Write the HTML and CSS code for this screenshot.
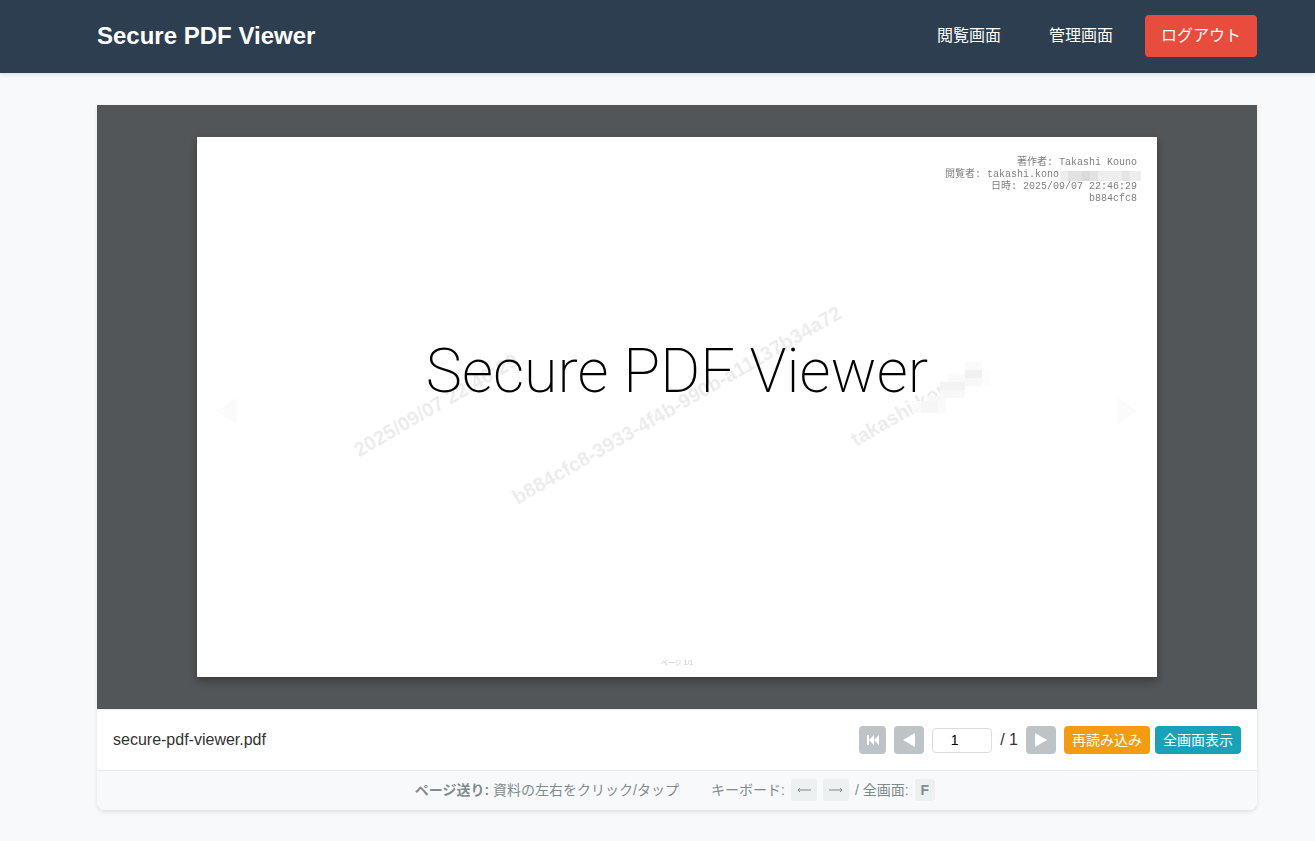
FILE: index.html
```html
<!DOCTYPE html>
<html lang="ja">
<head>
<meta charset="utf-8">
<meta name="viewport" content="width=device-width, initial-scale=1">
<title>Secure PDF Viewer</title>
<link rel="stylesheet" href="styles.css">
</head>
<body>
<header class="header">
  <h1 class="brand">Secure PDF Viewer</h1>
  <nav class="nav">
    <a class="nav-link" href="#">閲覧画面</a>
    <a class="nav-link" href="#">管理画面</a>
    <a class="nav-link logout" href="#">ログアウト</a>
  </nav>
</header>
<main class="main">
  <section class="viewer">
    <div class="stage">
      <svg class="page" viewBox="0 0 960 540" role="img" aria-label="Secure PDF Viewer">
        <rect width="960" height="540" fill="#fff"/>
        <text class="slide-title" x="480" y="255">Secure PDF Viewer</text>
        <g class="watermark">
          <text class="centered" transform="translate(239 268) rotate(-30)" y="7">2025/09/07 22:46:29</text>
          <text class="centered" transform="translate(480 268) rotate(-30)" y="7">b884cfc8-3933-4f4b-990b-a11137b34a72</text>
          <text transform="translate(659 310) rotate(-30)">takashi.kono</text>
        </g>
        <g class="mosaic">
          <rect x="715" y="264" width="34" height="12" fill="#fafafa"/>
          <rect x="724" y="264" width="17" height="12" fill="#f6f6f6"/>
          <rect x="731" y="259" width="17" height="5" fill="#f8f8f8"/>
          <rect x="743" y="253" width="25" height="8" fill="#f8f8f8"/>
          <rect x="743" y="245" width="25" height="8" fill="#f3f3f3"/>
          <rect x="751" y="237" width="25" height="8" fill="#fafafa"/>
          <rect x="768" y="225" width="17" height="8" fill="#fafafa"/>
          <rect x="768" y="233" width="17" height="8" fill="#f1f1f1"/>
          <rect x="768" y="241" width="17" height="8" fill="#f8f8f8"/>
          <rect x="785" y="233" width="9" height="16" fill="#fdfdfd"/>
        </g>
        <g class="stamp">
          <text x="940" y="28">著作者: Takashi Kouno</text>
          <text x="862" y="40">閲覧者: takashi.kono</text>
          <text x="940" y="52">日時: 2025/09/07 22:46:29</text>
          <text x="940" y="64">b884cfc8</text>
        </g>
        <g class="mosaic">
          <rect x="863" y="34" width="81" height="10" fill="#eee"/>
          <rect x="871" y="34" width="14" height="10" fill="#e2e2e2"/>
          <rect x="885" y="34" width="8" height="10" fill="#dadada"/>
          <rect x="893" y="34" width="8" height="10" fill="#e2e2e2"/>
          <rect x="925" y="34" width="8" height="10" fill="#e5e5e5"/>
        </g>
        <path d="M20 274l20-14v28z" fill="#fbfbfb"/>
        <path d="M940 274l-20-14v28z" fill="#fbfbfb"/>
        <text class="page-label" x="480" y="528">ページ 1/1</text>
      </svg>
    </div>
    <div class="toolbar">
      <span class="filename">secure-pdf-viewer.pdf</span>
      <div class="controls">
        <button class="btn small" disabled aria-label="最初のページ"><svg width="12" height="10" viewBox="0 0 12 10"><path d="M0 0h2v10H0zM7 0v10L2 5zM12 0v10L7 5z"/></svg></button>
        <button class="btn" disabled aria-label="前のページ"><svg width="12" height="14" viewBox="0 0 12 14"><path d="M12 0v14L0 7z"/></svg></button>
        <input class="page-input" type="text" inputmode="numeric" value="1" aria-label="ページ番号">
        <span class="total">/ 1</span>
        <button class="btn" disabled aria-label="次のページ"><svg width="12" height="14" viewBox="0 0 12 14"><path d="M0 0v14l12-7z"/></svg></button>
        <div class="actions">
          <button class="btn reload">再読み込み</button>
          <button class="btn fullscreen">全画面表示</button>
        </div>
      </div>
    </div>
    <div class="hints">
      <span><strong>ページ送り:</strong> 資料の左右をクリック/タップ</span>
      <span class="keys">キーボード: <kbd><svg width="14" height="8" viewBox="0 0 14 8"><path d="M14 4H1M3 2L1 4l2 2"/></svg></kbd><kbd><svg width="14" height="8" viewBox="0 0 14 8"><path d="M0 4h13M11 2l2 2-2 2"/></svg></kbd><span>/ 全画面:</span><kbd>F</kbd></span>
    </div>
  </section>
</main>
</body>
</html>
```

FILE: styles.css
```css
* { box-sizing: border-box; }

body {
  margin: 0;
  background: #f8f9fb;
  color: #333;
  font: 16px/26px "Liberation Sans", "Noto Sans CJK JP", sans-serif;
}

.header {
  display: flex;
  align-items: center;
  justify-content: space-between;
  padding: 15px 58px 16px 97px;
  background: #2c3e50;
  color: #fff;
  box-shadow: 0 2px 4px rgba(0, 0, 0, 0.1);
}

.brand { margin: 0; font-size: 24px; line-height: 38px; }

.nav { display: flex; gap: 16px; }

.nav-link {
  padding: 8px 16px;
  border-radius: 4px;
  color: #fff;
  text-decoration: none;
}

.logout { background: #e74c3c; }

.main { padding: 32px 58px 31px 97px; }

.viewer {
  overflow: hidden;
  border-radius: 0 0 8px 8px;
  background: #fff;
  box-shadow: 0 2px 4px rgba(0, 0, 0, 0.1);
}

.stage { display: flex; padding: 32px 100px; background: #525659; }

.page {
  display: block;
  width: 100%;
  box-shadow: 0 4px 8px rgba(0, 0, 0, 0.3);
}

.slide-title {
  font: 200 61px Roboto, sans-serif;
  text-anchor: middle;
}

.watermark { fill: #000; opacity: 0.08; font: bold 20px "Liberation Sans", sans-serif; }
.centered { text-anchor: middle; }

.stamp {
  fill: #7f7f7f;
  font: 10px "Liberation Mono", "Noto Sans CJK JP", monospace;
  text-anchor: end;
}

.page-label {
  fill: #ccc;
  font: 7px "Liberation Sans", "Noto Sans CJK JP", sans-serif;
  text-anchor: middle;
}

.toolbar {
  display: flex;
  align-items: center;
  justify-content: space-between;
  padding: 16px;
  border-top: 1px solid #e9ecef;
}

.controls { display: flex; align-items: center; gap: 8px; }
.actions { display: flex; gap: 5px; }

.btn {
  display: flex;
  align-items: center;
  justify-content: center;
  height: 28px;
  min-width: 30px;
  padding: 0 8px;
  border: 0;
  border-radius: 4px;
  background: #bdc3c7;
  color: #fff;
  font: 400 14px/28px "Liberation Sans", "Noto Sans CJK JP", sans-serif;
}

.btn svg { fill: #fff; }
.small { min-width: 27px; padding: 0; }
.reload { background: #f39c12; }
.fullscreen { background: #17a2b8; }

.page-input {
  width: 60px;
  height: 25px;
  padding: 0 15px 0 0;
  border: 1px solid #ddd;
  border-radius: 4px;
  font: 14px "Liberation Sans", sans-serif;
  text-align: center;
}

.hints {
  display: flex;
  align-items: center;
  justify-content: center;
  gap: 32px;
  padding: 8px 20px 9px 16px;
  border-top: 1px solid #e9ecef;
  background: #f8f9fb;
  color: #7f8c8d;
  font-size: 14px;
  line-height: 22px;
}

.keys { display: flex; align-items: center; gap: 6px; }

kbd {
  display: flex;
  align-items: center;
  justify-content: center;
  height: 22px;
  padding: 0 6px;
  border-radius: 3px;
  background: #ecf0f1;
  font: bold 14px "Liberation Sans", sans-serif;
}

kbd svg { fill: none; stroke: #7f8c8d; }
```
